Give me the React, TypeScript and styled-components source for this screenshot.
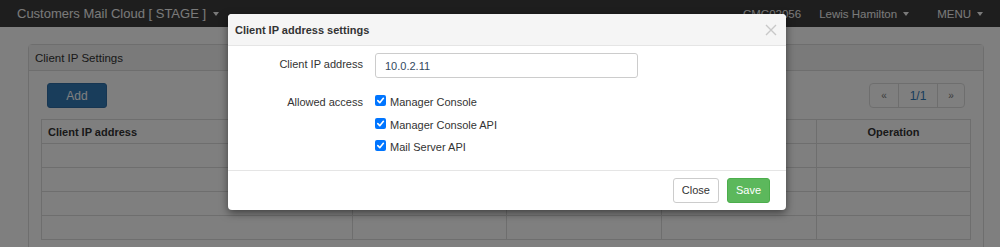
import styled, { createGlobalStyle } from 'styled-components';

const GlobalStyle = createGlobalStyle`
  html, body {
    margin: 0;
    padding: 0;
    background: #fff;
    font-family: "Liberation Sans", Arial, sans-serif;
    font-size: 11px;
    color: #333;
  }
  * { box-sizing: border-box; }
`;

const Page = styled.div`
  position: relative;
  width: 1000px;
  height: 247px;
  overflow: hidden;
  background: #fff;
`;

const Navbar = styled.div`
  height: 27px;
  background: #3c3c3c;
  display: flex;
  align-items: center;
  padding: 0 17px 0 17px;
  color: #f4f4f4;
`;

const Brand = styled.div`
  font-size: 13px;
  display: flex;
  align-items: center;
  gap: 7px;
`;

const NavRight = styled.div`
  margin-left: auto;
  display: flex;
  align-items: center;
  font-size: 11.5px;
`;

const NavItem = styled.div<{ $ml?: number }>`
  display: flex;
  align-items: center;
  gap: 6px;
  margin-left: ${p => p.$ml ?? 0}px;
`;

const Caret = styled.span`
  display: inline-block;
  width: 0;
  height: 0;
  border-left: 3.5px solid transparent;
  border-right: 3.5px solid transparent;
  border-top: 4px solid currentColor;
`;

const Content = styled.div`
  padding: 17px 16px 0 28px;
`;

const Panel = styled.div`
  border: 1px solid #ddd;
  border-radius: 4px;
  background: #fff;
`;

const PanelHeading = styled.div`
  height: 26px;
  background: #f5f5f5;
  border-bottom: 1px solid #ddd;
  padding: 0 6px;
  display: flex;
  align-items: center;
  font-size: 11.5px;
`;

const PanelBody = styled.div`
  padding: 12px 12px;
`;

const Toolbar = styled.div`
  display: flex;
  justify-content: space-between;
  align-items: center;
  padding: 0 6px;
  margin-bottom: 11px;
`;

const PrimaryButton = styled.button`
  width: 60px;
  height: 25px;
  background: #337ab7;
  border: 1px solid #2e6da4;
  border-radius: 3px;
  color: #fff;
  font-family: inherit;
  font-size: 12px;
`;

const Pager = styled.div`
  display: flex;
  height: 25px;
  border: 1px solid #ddd;
  border-radius: 4px;
`;

const PagerCell = styled.div<{ $w: number; $muted?: boolean }>`
  width: ${p => p.$w}px;
  display: flex;
  align-items: center;
  justify-content: center;
  color: ${p => (p.$muted ? '#777' : '#337ab7')};
  font-size: ${p => (p.$muted ? 10 : 12)}px;
  & + & { border-left: 1px solid #ddd; }
`;

const Table = styled.table`
  width: 929px;
  border-collapse: collapse;
  table-layout: fixed;
`;

const Th = styled.th<{ $center?: boolean }>`
  height: 24px;
  border: 1px solid #ddd;
  text-align: ${p => (p.$center ? 'center' : 'left')};
  padding: 0 6px;
  font-weight: bold;
  font-size: 11px;
  color: #333;
`;

const Td = styled.td`
  height: 24px;
  border: 1px solid #ddd;
`;

const Backdrop = styled.div`
  position: absolute;
  inset: 0;
  background: rgba(0, 0, 0, 0.5);
`;

const Modal = styled.div`
  position: absolute;
  top: 14px;
  left: 228px;
  width: 558px;
  height: 196px;
  background: #fff;
  border-radius: 4px;
  box-shadow: 0 3px 9px rgba(0, 0, 0, 0.5);
  overflow: hidden;
  display: flex;
  flex-direction: column;
`;

const ModalHeader = styled.div`
  height: 32px;
  background: #f5f5f5;
  border-bottom: 1px solid #e5e5e5;
  display: flex;
  align-items: center;
  justify-content: space-between;
  padding: 0 9px 0 7px;
`;

const ModalTitle = styled.div`
  font-weight: bold;
  font-size: 11px;
  color: #333;
`;

const ModalBody = styled.div`
  flex: 1;
  padding: 7px 0 0;
  border-bottom: 1px solid #e5e5e5;
`;

const FormRow = styled.div<{ $mb?: number }>`
  display: grid;
  grid-template-columns: 135px 263px;
  column-gap: 12px;
  align-items: start;
  margin-bottom: ${p => p.$mb ?? 0}px;
`;

const Label = styled.div<{ $pt: number }>`
  text-align: right;
  padding-top: ${p => p.$pt}px;
  color: #333;
`;

const Input = styled.div`
  height: 25px;
  border: 1px solid #ccc;
  border-radius: 3px;
  padding: 0 9px;
  display: flex;
  align-items: center;
  color: #34495e;
  font-size: 11px;
`;

const Checks = styled.div`
  display: flex;
  flex-direction: column;
  gap: 6.5px;
`;

const CheckRow = styled.label`
  display: flex;
  align-items: center;
  gap: 4px;
  height: 16px;
  color: #333;
`;

const Box = styled.span`
  width: 11px;
  height: 11px;
  border-radius: 2px;
  background: #0075ff;
  display: flex;
  align-items: center;
  justify-content: center;
  margin-top: -3px;
`;

const ModalFooter = styled.div`
  height: 39px;
  display: flex;
  align-items: center;
  justify-content: flex-end;
  gap: 8px;
  padding: 0 16px 1px 0;
`;

const FooterButton = styled.button<{ $primary?: boolean }>`
  height: 25px;
  padding: 0 8px;
  border-radius: 3px;
  font-family: inherit;
  font-size: 11px;
  background: ${p => (p.$primary ? '#5cb85c' : '#fff')};
  border: 1px solid ${p => (p.$primary ? '#4cae4c' : '#ccc')};
  color: ${p => (p.$primary ? '#fff' : '#333')};
`;

const Check = () => (
  <Box>
    <svg width="9" height="9" viewBox="0 0 10 10">
      <path d="M2 5.2 L4.2 7.4 L8.2 2.6" fill="none" stroke="#fff" strokeWidth="1.8" strokeLinecap="round" strokeLinejoin="round" />
    </svg>
  </Box>
);

const CloseIcon = () => (
  <svg width="12" height="12" viewBox="0 0 12 12">
    <path d="M1 1 L11 11 M11 1 L1 11" stroke="#c8c8c8" strokeWidth="1.4" />
  </svg>
);

const rows = [0, 1, 2, 3];
const access = ['Manager Console', 'Manager Console API', 'Mail Server API'];

export default function App() {
  return (
    <Page>
      <GlobalStyle />
      <Navbar>
        <Brand>
          Customers Mail Cloud [ STAGE ] <Caret />
        </Brand>
        <NavRight>
          <NavItem>CMC02056</NavItem>
          <NavItem $ml={18}>Lewis Hamilton <Caret /></NavItem>
          <NavItem $ml={28}>MENU <Caret /></NavItem>
        </NavRight>
      </Navbar>
      <Content>
        <Panel>
          <PanelHeading>Client IP Settings</PanelHeading>
          <PanelBody>
            <Toolbar>
              <PrimaryButton>Add</PrimaryButton>
              <Pager>
                <PagerCell $w={28} $muted>«</PagerCell>
                <PagerCell $w={39}>1/1</PagerCell>
                <PagerCell $w={27} $muted>»</PagerCell>
              </Pager>
            </Toolbar>
            <Table>
              <colgroup>
                <col style={{ width: 311 }} />
                <col style={{ width: 154 }} />
                <col style={{ width: 155 }} />
                <col style={{ width: 155 }} />
                <col style={{ width: 154 }} />
              </colgroup>
              <thead>
                <tr>
                  <Th>Client IP address</Th>
                  <Th />
                  <Th />
                  <Th />
                  <Th $center>Operation</Th>
                </tr>
              </thead>
              <tbody>
                {rows.map(r => (
                  <tr key={r}>
                    <Td /><Td /><Td /><Td /><Td />
                  </tr>
                ))}
              </tbody>
            </Table>
          </PanelBody>
        </Panel>
      </Content>
      <Backdrop />
      <Modal>
        <ModalHeader>
          <ModalTitle>Client IP address settings</ModalTitle>
          <CloseIcon />
        </ModalHeader>
        <ModalBody>
          <FormRow $mb={16}>
            <Label $pt={5}>Client IP address</Label>
            <Input>10.0.2.11</Input>
          </FormRow>
          <FormRow>
            <Label $pt={2}>Allowed access</Label>
            <Checks>
              {access.map(a => (
                <CheckRow key={a}>
                  <Check />
                  {a}
                </CheckRow>
              ))}
            </Checks>
          </FormRow>
        </ModalBody>
        <ModalFooter>
          <FooterButton>Close</FooterButton>
          <FooterButton $primary>Save</FooterButton>
        </ModalFooter>
      </Modal>
    </Page>
  );
}
